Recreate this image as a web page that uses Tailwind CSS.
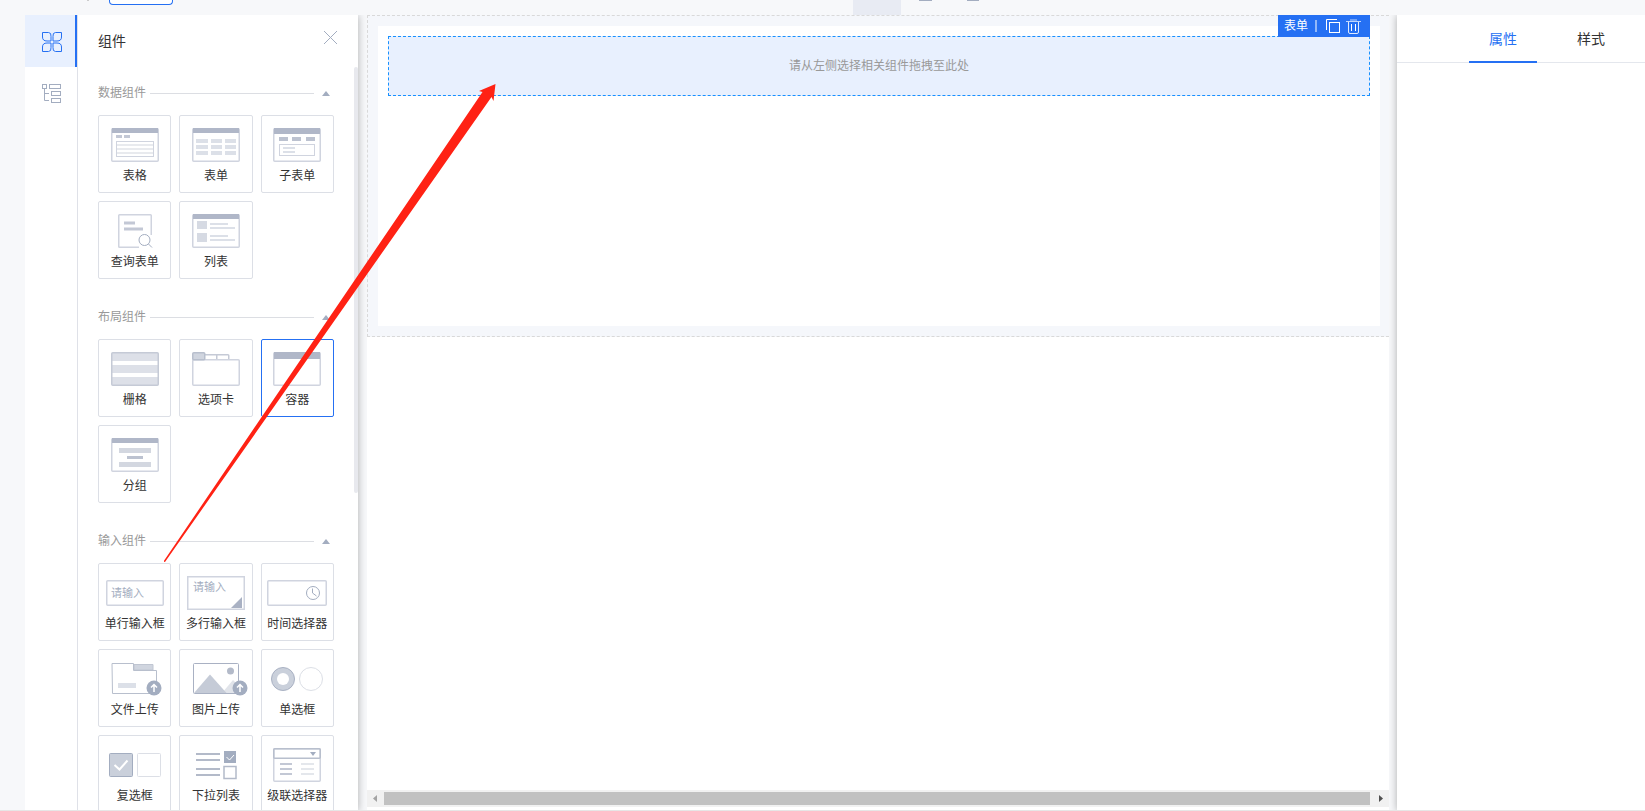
<!DOCTYPE html>
<html lang="zh-CN">
<head>
    <meta charset="UTF-8" />
    <meta name="viewport" content="width=device-width, initial-scale=1.0" />
    <title>页面设计器</title>

    <script src="https://cdn.jsdelivr.net/npm/@tailwindcss/browser@4"></script>

    <style>
        body {
            font-family: 'Liberation Sans', 'Noto Sans CJK SC', sans-serif;
        }
    </style>
</head>
<body class="relative h-screen overflow-hidden flex flex-col bg-[#f7f8fa] text-xs text-[#333]">

    <!-- Toolbar -->
    <header class="h-[15px] shrink-0 flex items-start overflow-hidden">
        <span class="ml-[87px] w-[2px] h-px bg-[#ccc]"></span>
        <button type="button" aria-label="页面" class="ml-5 w-16 h-[5px] border border-t-0 border-[#2570f3] rounded-b-sm bg-white"></button>
        <div class="ml-[680px] flex h-full">
            <button type="button" aria-label="电脑" class="w-12 h-full bg-[#e8ebf3]"></button>
            <button type="button" aria-label="平板" class="w-12 h-full flex justify-center items-start"><span class="w-[13px] h-px bg-[#a3adc0]"></span></button>
            <button type="button" aria-label="手机" class="w-12 h-full flex justify-center items-start"><span class="w-3 h-px bg-[#a3adc0]"></span></button>
        </div>
    </header>

    <div class="flex-1 min-h-0 flex pl-[25px]">
        <!-- Side rail -->
        <nav class="w-[53px] shrink-0 bg-white border-r border-[#dfe1e8]">
            <button type="button" aria-label="组件" class="w-full h-[52px] flex items-center justify-center pl-[3px] pt-[2px] bg-[#e8f0fe] border-r-2 border-[#2570f3]">
                <svg class="w-5 h-5" viewBox="0 0 20 20" fill="none" stroke="#2570f3">
                    <path d="M.5 .5H6.5Q9.5 .5 9 4.5V9H5Q.5 9 .5 5Z" />
                    <path d="M19.5 .5H13.5Q10.5 .5 11 4.5V9H15Q19.5 9 19.5 5Z" />
                    <path d="M.5 19.5H6.5Q9.5 19.5 9 15.5V11H5Q.5 11 .5 15Z" />
                    <path d="M19.5 19.5H13.5Q10.5 19.5 11 15.5V11H15Q19.5 11 19.5 15Z" />
                </svg>
            </button>
            <button type="button" aria-label="大纲树" class="w-full h-[52px] flex items-center justify-center pl-[2px] pt-[2px]">
                <svg class="w-5 h-5" viewBox="0 0 20 20" fill="none" stroke="#a3adc0">
                    <rect x=".5" y=".5" width="4" height="4" />
                    <rect x="7.5" y=".5" width="11" height="4" />
                    <rect x="9.5" y="7.5" width="9" height="4" />
                    <rect x="9.5" y="14.5" width="9" height="4" />
                    <path d="M2.5 5V16.5H7M2.5 9.5H7" />
                </svg>
            </button>
        </nav>

        <!-- Component panel -->
        <aside class="relative z-10 w-[280px] shrink-0 bg-white pl-5 pr-6 overflow-hidden shadow-[0_0_8px_rgba(0,0,0,0.3)] [clip-path:inset(0_-9px_0_0)]">
            <div class="h-[52px] flex items-center justify-between">
                <h1 class="text-sm">组件</h1>
                <button type="button" aria-label="关闭" class="-mr-1 mb-2">
                    <svg class="w-[15px] h-[15px]" viewBox="0 0 15 15" stroke="#a3adc0"><path d="M1 1L14 14M14 1L1 14" /></svg>
                </button>
            </div>
            <div class="absolute right-0 top-[52px] w-1 h-[426px] rounded-full bg-[#e8e9ee]"></div>

            <section class="mt-[17px]">
                <div class="h-[18px] mb-[13px] flex items-center">
                    <h2 class="text-[#999]">数据组件</h2>
                    <div class="flex-1 h-px bg-[#dcdee3] ml-1 mr-2"></div>
                    <svg class="w-2 h-[5px] mr-1" viewBox="0 0 8 5"><path d="M4 0L8 5H0Z" fill="#a3adc0" /></svg>
                </div>
                <div class="grid grid-cols-3 gap-2">
                    <button type="button" class="h-[78px] flex flex-col items-center gap-1 pt-3 border border-[#dcdfe6] rounded-xs">
                        <svg class="w-12 h-[34px] shrink-0" viewBox="0 0 48 34" fill="none">
                            <rect x=".75" y=".75" width="46.5" height="32.5" rx="1" stroke="#d0d4df" stroke-width="1.5" />
                            <path d="M1 0H47V5H1Z" fill="#b0b7c8" />
                            <path d="M5 7H11V10H5ZM13 7H19V10H13Z" fill="#c3c8d5" />
                            <rect x="5.5" y="13.5" width="37" height="15" stroke="#d0d4df" />
                            <path d="M6 17H42M6 21H42M6 25H42" stroke="#e8eaee" stroke-width="2" />
                        </svg>
                        <span class="leading-5">表格</span>
                    </button>
                    <button type="button" class="h-[78px] flex flex-col items-center gap-1 pt-3 border border-[#dcdfe6] rounded-xs">
                        <svg class="w-12 h-[34px] shrink-0" viewBox="0 0 48 34" fill="none">
                            <rect x=".75" y=".75" width="46.5" height="32.5" rx="1" stroke="#d0d4df" stroke-width="1.5" />
                            <path d="M1 0H47V5H1Z" fill="#b0b7c8" />
                            <path d="M4 13H16M19 13H30M33 13H44M4 19H16M19 19H30M33 19H44M4 25H16M19 25H30M33 25H44" stroke="#dce0e8" stroke-width="4" />
                        </svg>
                        <span class="leading-5">表单</span>
                    </button>
                    <button type="button" class="h-[78px] flex flex-col items-center gap-1 pt-3 border border-[#dcdfe6] rounded-xs">
                        <svg class="w-12 h-[34px] shrink-0" viewBox="0 0 48 34" fill="none">
                            <rect x=".75" y=".75" width="46.5" height="32.5" rx="1" stroke="#d0d4df" stroke-width="1.5" />
                            <path d="M1 0H47V6H1Z" fill="#b0b7c8" />
                            <path d="M6 11H15M19 11H28M33 11H42" stroke="#bcc2d0" stroke-width="4" />
                            <rect x="6.5" y="16.5" width="35" height="11" stroke="#d0d4df" />
                            <path d="M10 20H22M10 24H22" stroke="#dce0e8" stroke-width="2" />
                        </svg>
                        <span class="leading-5">子表单</span>
                    </button>
                    <button type="button" class="h-[78px] flex flex-col items-center gap-1 pt-3 border border-[#dcdfe6] rounded-xs">
                        <svg class="w-12 h-[34px] shrink-0" viewBox="0 0 48 34" fill="none">
                            <path d="M28 33.25H8.5Q7.75 33.25 7.75 32.5V1.5Q7.75 .75 8.5 .75H39.5Q40.25 .75 40.25 1.5V21" stroke="#d0d4df" stroke-width="1.5" />
                            <path d="M13 9H24M13 15H32" stroke="#c3c8d5" stroke-width="3" />
                            <circle cx="33.5" cy="26" r="5.5" stroke="#a3adc0" />
                            <path d="M37.5 30L41 33.5" stroke="#a3adc0" />
                        </svg>
                        <span class="leading-5">查询表单</span>
                    </button>
                    <button type="button" class="h-[78px] flex flex-col items-center gap-1 pt-3 border border-[#dcdfe6] rounded-xs">
                        <svg class="w-12 h-[34px] shrink-0" viewBox="0 0 48 34" fill="none">
                            <rect x=".75" y=".75" width="46.5" height="32.5" rx="1" stroke="#d0d4df" stroke-width="1.5" />
                            <path d="M1 0H47V5H1Z" fill="#b0b7c8" />
                            <path d="M5 7H15V15H5ZM5 19H15V28H5Z" fill="#d6dae3" />
                            <path d="M18 10H36M18 14H43M18 22H36M18 26H43" stroke="#dce0e8" stroke-width="2" />
                        </svg>
                        <span class="leading-5">列表</span>
                    </button>
                </div>
            </section>

            <section class="mt-[29px]">
                <div class="h-[18px] mb-[13px] flex items-center">
                    <h2 class="text-[#999]">布局组件</h2>
                    <div class="flex-1 h-px bg-[#dcdee3] ml-1 mr-2"></div>
                    <svg class="w-2 h-[5px] mr-1" viewBox="0 0 8 5"><path d="M4 0L8 5H0Z" fill="#a3adc0" /></svg>
                </div>
                <div class="grid grid-cols-3 gap-2">
                    <button type="button" class="h-[78px] flex flex-col items-center gap-1 pt-3 border border-[#dcdfe6] rounded-xs">
                        <svg class="w-12 h-[34px] shrink-0" viewBox="0 0 48 34" fill="none">
                            <path d="M1 1H47V9H1ZM1 13H47V21H1ZM1 25H47V33H1Z" fill="#dde0e8" />
                            <rect x=".75" y=".75" width="46.5" height="32.5" rx="1" stroke="#c5cad6" stroke-width="1.5" />
                        </svg>
                        <span class="leading-5">栅格</span>
                    </button>
                    <button type="button" class="h-[78px] flex flex-col items-center gap-1 pt-3 border border-[#dcdfe6] rounded-xs">
                        <svg class="w-12 h-[34px] shrink-0" viewBox="0 0 48 34" fill="none" stroke-width="1.5">
                            <path d="M13 2.75H36Q36.75 2.75 36.75 3.5V8M24.75 3V8" stroke="#c5cad6" />
                            <rect x=".75" y="7.75" width="46.5" height="25.5" rx="1" stroke="#d0d4df" />
                            <rect x=".75" y=".75" width="12" height="7" rx="1" fill="#d0d5df" stroke="#b8bfcd" />
                        </svg>
                        <span class="leading-5">选项卡</span>
                    </button>
                    <button type="button" class="h-[78px] flex flex-col items-center gap-1 pt-3 border border-[#2570f3] rounded-xs">
                        <svg class="w-12 h-[34px] shrink-0" viewBox="0 0 48 34" fill="none">
                            <rect x=".75" y=".75" width="46.5" height="32.5" rx="1" stroke="#d0d4df" stroke-width="1.5" />
                            <path d="M1 0H47V7H1Z" fill="#b0b7c8" />
                        </svg>
                        <span class="leading-5">容器</span>
                    </button>
                    <button type="button" class="h-[78px] flex flex-col items-center gap-1 pt-3 border border-[#dcdfe6] rounded-xs">
                        <svg class="w-12 h-[34px] shrink-0" viewBox="0 0 48 34" fill="none">
                            <rect x=".75" y=".75" width="46.5" height="32.5" rx="1" stroke="#d0d4df" stroke-width="1.5" />
                            <path d="M1 0H47V5H1Z" fill="#b0b7c8" />
                            <path d="M8 10H40V15H8ZM8 24H40V29H8Z" fill="#d3d7e0" />
                            <path d="M16 18H32V21H16Z" fill="#bcc2d0" />
                        </svg>
                        <span class="leading-5">分组</span>
                    </button>
                </div>
            </section>

            <section class="mt-[29px]">
                <div class="h-[18px] mb-[13px] flex items-center">
                    <h2 class="text-[#999]">输入组件</h2>
                    <div class="flex-1 h-px bg-[#dcdee3] ml-1 mr-2"></div>
                    <svg class="w-2 h-[5px] mr-1" viewBox="0 0 8 5"><path d="M4 0L8 5H0Z" fill="#a3adc0" /></svg>
                </div>
                <div class="grid grid-cols-3 gap-2">
                    <button type="button" class="h-[78px] flex flex-col items-center gap-1 pt-3 border border-[#dcdfe6] rounded-xs">
                        <svg class="w-[58px] h-[34px] shrink-0" viewBox="0 0 58 34" fill="none">
                            <rect x=".75" y="4.75" width="56.5" height="24.5" rx="1" stroke="#d0d4df" stroke-width="1.5" />
                            <text x="5" y="21" font-size="11" fill="#a3adc0">请输入</text>
                        </svg>
                        <span class="leading-5 whitespace-nowrap">单行输入框</span>
                    </button>
                    <button type="button" class="h-[78px] flex flex-col items-center gap-1 pt-3 border border-[#dcdfe6] rounded-xs">
                        <svg class="w-[58px] h-[34px] shrink-0" viewBox="0 0 58 34" fill="none">
                            <rect x=".75" y=".75" width="56.5" height="32.5" stroke="#d0d4df" stroke-width="1.5" />
                            <text x="6" y="15" font-size="11" fill="#a3adc0">请输入</text>
                            <path d="M55 21V32H44Z" fill="#a9b1c3" />
                        </svg>
                        <span class="leading-5 whitespace-nowrap">多行输入框</span>
                    </button>
                    <button type="button" class="h-[78px] flex flex-col items-center gap-1 pt-3 border border-[#dcdfe6] rounded-xs">
                        <svg class="w-[60px] h-[34px] shrink-0" viewBox="0 0 60 34" fill="none">
                            <rect x=".75" y="4.75" width="58.5" height="24.5" rx="1" stroke="#d0d4df" stroke-width="1.5" />
                            <circle cx="46" cy="17" r="6.5" stroke="#a3adc0" />
                            <path d="M45.5 12.5V17L49.5 20" stroke="#a3adc0" />
                        </svg>
                        <span class="leading-5 whitespace-nowrap">时间选择器</span>
                    </button>
                    <button type="button" class="h-[78px] flex flex-col items-center gap-1 pt-3 border border-[#dcdfe6] rounded-xs">
                        <svg class="w-[58px] h-[34px] shrink-0" viewBox="0 0 58 34" fill="none">
                            <path d="M28 2.5H47V8H28Z" fill="#d0d5df" stroke="#c0c6d2" />
                            <path d="M6 1.5H27.5V8.5H50.5V31.5H6.5Z" stroke="#b8bfcd" />
                            <path d="M12 21H30V26H12Z" fill="#dce0e8" />
                            <circle cx="48" cy="26" r="7.5" fill="#a3adc0" />
                            <path d="M48 30V22.5M45 25.5L48 22.5L51 25.5" stroke="#fff" stroke-width="1.5" />
                        </svg>
                        <span class="leading-5 whitespace-nowrap">文件上传</span>
                    </button>
                    <button type="button" class="h-[78px] flex flex-col items-center gap-1 pt-3 border border-[#dcdfe6] rounded-xs">
                        <svg class="w-[58px] h-[34px] shrink-0 overflow-visible" viewBox="0 0 58 34" fill="none">
                            <path d="M35 31L46 18L51 23V31Z" fill="#e1e4ea" />
                            <path d="M7 31L23 12.5L39.5 31Z" fill="#c5cbd7" />
                            <rect x="6.5" y="1.5" width="45" height="30" rx="1" stroke="#a9b1c3" />
                            <circle cx="43.5" cy="9" r="3.5" fill="#b3bac9" />
                            <circle cx="53" cy="26" r="7.5" fill="#a3adc0" />
                            <path d="M53 30V22.5M50 25.5L53 22.5L56 25.5" stroke="#fff" stroke-width="1.5" />
                        </svg>
                        <span class="leading-5 whitespace-nowrap">图片上传</span>
                    </button>
                    <button type="button" class="h-[78px] flex flex-col items-center gap-1 pt-3 border border-[#dcdfe6] rounded-xs">
                        <svg class="w-[60px] h-[34px] shrink-0" viewBox="0 0 60 34" fill="none">
                            <circle cx="16" cy="17" r="11.5" fill="#cad0db" stroke="#a9b1c3" />
                            <circle cx="16" cy="17" r="6" fill="#fff" />
                            <circle cx="44" cy="17" r="11.5" stroke="#dcdfe6" />
                        </svg>
                        <span class="leading-5 whitespace-nowrap">单选框</span>
                    </button>
                    <button type="button" class="h-[78px] flex flex-col items-center gap-1 pt-3 border border-[#dcdfe6] rounded-xs">
                        <svg class="w-[58px] h-[34px] shrink-0" viewBox="0 0 58 34" fill="none">
                            <rect x="3.5" y="5.5" width="23" height="23" rx="1" fill="#cad0db" stroke="#a3adc0" />
                            <path d="M8.5 17L13.5 21.5L21.5 12.5" stroke="#fff" stroke-width="2" />
                            <rect x="31.5" y="5.5" width="23" height="23" rx="1" stroke="#dcdfe6" />
                        </svg>
                        <span class="leading-5 whitespace-nowrap">复选框</span>
                    </button>
                    <button type="button" class="h-[78px] flex flex-col items-center gap-1 pt-3 border border-[#dcdfe6] rounded-xs">
                        <svg class="w-[58px] h-[34px] shrink-0" viewBox="0 0 58 34" fill="none">
                            <path d="M9 6H33M9 12H33M9 21H33M9 27H33" stroke="#b3bac9" stroke-width="2" />
                            <path d="M37 3H49V15H37Z" fill="#a3adc0" />
                            <path d="M39.5 9L42.5 12L47 7" stroke="#fff" />
                            <rect x="37" y="18.5" width="12" height="12" stroke="#b3bac9" stroke-width="1.5" />
                        </svg>
                        <span class="leading-5 whitespace-nowrap">下拉列表</span>
                    </button>
                    <button type="button" class="h-[78px] flex flex-col items-center gap-1 pt-3 border border-[#dcdfe6] rounded-xs">
                        <svg class="w-12 h-[34px] shrink-0" viewBox="0 0 48 34" fill="none">
                            <rect x=".75" y=".75" width="46.5" height="32.5" rx="1" stroke="#d0d4df" stroke-width="1.5" />
                            <rect x=".75" y=".75" width="46.5" height="9.5" rx="1" stroke="#b8bfcd" stroke-width="1.5" />
                            <path d="M37 4H43L40 8Z" fill="#a3adc0" />
                            <path d="M7 16H19M7 21H19M7 26H19" stroke="#c3c8d5" stroke-width="2" />
                            <path d="M28 16H41M28 21H41M28 26H41" stroke="#e4e7ec" stroke-width="2" />
                        </svg>
                        <span class="leading-5 whitespace-nowrap">级联选择器</span>
                    </button>
                </div>
            </section>
        </aside>

        <!-- Canvas -->
        <main class="flex-1 min-w-0 flex flex-col ml-[9px] mr-2 bg-white">
            <div class="flex-1 min-h-0">
                <div class="border border-r-0 border-dashed border-[#d9d9d9] bg-[#f5f7fb] p-[10px] pr-[9px]">
                    <div class="h-[300px] bg-white p-[10px]">
                        <div class="relative h-[60px] flex items-center justify-center bg-[#e8f0fe] border border-dashed border-[#1890ff]">
                            <p class="text-[#999]">请从左侧选择相关组件拖拽至此处</p>
                            <div class="absolute -right-px -top-[22px] w-[92px] h-[22px] pl-[6px] flex items-center bg-[#2570f3] text-white">
                                <span>表单</span>
                                <span class="w-[2px] h-3 ml-[7px] mr-[9px] bg-white/50"></span>
                                <button type="button" aria-label="复制" class="mr-[6px]">
                                    <svg class="w-[14px] h-[14px]" viewBox="0 0 14 14" fill="none" stroke="#fff">
                                        <rect x="3.5" y="3.5" width="10" height="10" />
                                        <path d="M.5 11V.5H11" />
                                    </svg>
                                </button>
                                <button type="button" aria-label="删除">
                                    <svg class="w-[15px] h-[15px]" viewBox="0 0 15 15" fill="none" stroke="#fff">
                                        <path d="M0 2.5H15M4 1H11" stroke-opacity=".7" />
                                        <path d="M2.5 3V13Q2.5 14.5 4 14.5H11Q12.5 14.5 12.5 13V3" stroke-opacity=".85" />
                                        <path d="M5.5 5V12M9.5 5V12" />
                                    </svg>
                                </button>
                            </div>
                        </div>
                    </div>
                </div>
            </div>
            <div class="h-[17px] mb-1 shrink-0 flex items-center bg-[#f1f1f1]">
                <svg class="w-[17px] h-[17px] shrink-0" viewBox="0 0 17 17"><path d="M10 5V12L6 8.5Z" fill="#a3a3a3" /></svg>
                <div class="flex-1 h-[13px] bg-[#c1c1c1]"></div>
                <svg class="w-[19px] h-[17px] shrink-0" viewBox="0 0 19 17"><path d="M9 5V12L13 8.5Z" fill="#505050" /></svg>
            </div>
        </main>

        <!-- Properties -->
        <aside class="w-[248px] shrink-0 bg-white shadow-[0_0_8px_rgba(0,0,0,0.3)] [clip-path:inset(0_0_0_-8px)]">
            <div class="h-12 flex justify-end gap-5 pr-5 border-b border-[#e4e7ed] text-sm">
                <button type="button" class="w-[68px] h-12 shrink-0 pt-[2px] border-b-2 border-[#2570f3] text-[#2570f3]">属性</button>
                <button type="button" class="w-[68px] h-12 shrink-0 pt-[2px] border-b-2 border-transparent">样式</button>
            </div>
        </aside>
    </div>

    <!-- Drag hint and bottom edge -->
    <svg class="absolute z-20 left-[164px] top-[84px] w-[332px] h-[478px] pointer-events-none" viewBox="164 84 332 478">
        <path d="M163.5 561.5L482.5 92L479 91L495.5 84L493.5 101L491.5 97L165 562Z" fill="#ff2214" />
    </svg>
    <div class="absolute z-20 inset-x-0 bottom-0 h-px bg-[#e6e6e6]"></div>
</body>
</html>
